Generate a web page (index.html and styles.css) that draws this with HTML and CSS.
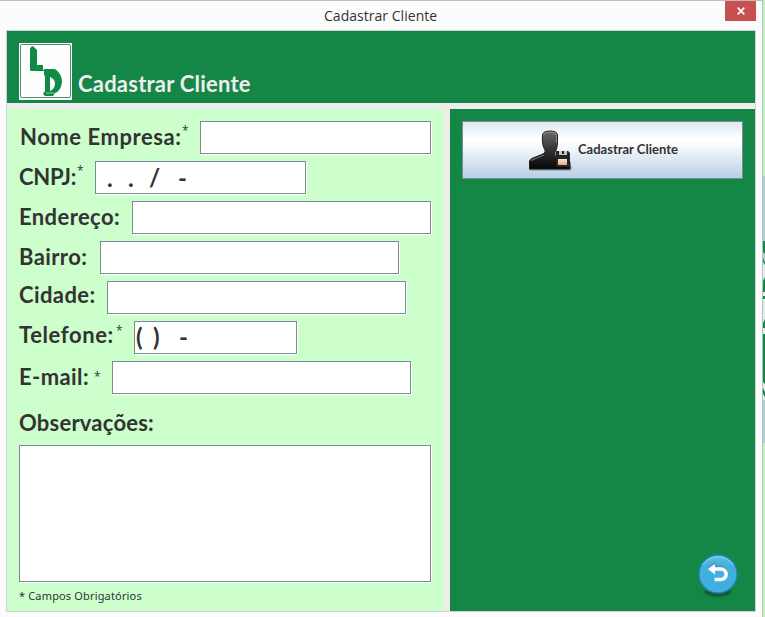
FILE: index.html
```html
<!DOCTYPE html>
<html lang="pt-BR">
<head>
<meta charset="utf-8">
<title>Cadastrar Cliente</title>
<link rel="stylesheet" href="styles.css">
</head>
<body>
<div class="screen">
  <main class="window">
    <div class="titlebar">
      <span class="window-title">Cadastrar Cliente</span>
      <button class="close" aria-label="Fechar"><svg width="8" height="8" viewBox="0 0 8 8"><path d="M.7.7 7.3 7.3M7.3.7.7 7.3" stroke="#fff" stroke-width="1.7"/></svg></button>
    </div>
    <div class="frame">
      <header class="header">
        <svg class="logo" width="53" height="57" viewBox="0 0 53 57">
          <rect width="53" height="57" fill="#fcfffd"/>
          <rect x="1.5" y="1.5" width="50" height="53" rx="1.5" fill="none" stroke="#568c70"/>
          <path d="M11 5.500Q13 2 15 4L18 7V22L24 22V27L12 28 11 27Z" fill="#108b43"/>
          <path d="M12 27.500H26" stroke="#108b43"/>
          <path fill-rule="evenodd" d="M25 26H36Q43 31 43 39 42 48 36 50L34 53H26L24 51 26 48V33L25 32ZM31 34V48Q36 46 36 40 35 35 31 34Z" fill="#108b43"/>
          <path d="M32 35Q36 36 36 40M27 50H35" fill="none" stroke="#8fc9a7"/>
        </svg>
        <h1 class="heading"><span class="t-head">Cadastrar Cliente</span></h1>
      </header>
      <div class="content">
        <form class="form">
          <div class="row nome"><label><span>Nome Empresa:</span></label><sup>*</sup><div class="field"></div></div>
          <div class="row cnpj"><label><span>CNPJ:</span></label><sup>*</sup><div class="field mask"><i>.</i><i>.</i><i>/</i><i>-</i></div></div>
          <div class="row endereco"><label><span>Endereço:</span></label><div class="field"></div></div>
          <div class="row bairro"><label><span>Bairro:</span></label><div class="field"></div></div>
          <div class="row cidade"><label><span>Cidade:</span></label><div class="field"></div></div>
          <div class="row telefone"><label><span>Telefone:</span></label><sup>*</sup><div class="field mask"><i>(</i><i>)</i><i>-</i></div></div>
          <div class="row email"><label><span>E-mail:</span></label><sup>*</sup><div class="field"></div></div>
          <div class="obs"><span>Observações:</span></div>
          <div class="area"></div>
          <p class="note">* Campos Obrigatórios</p>
        </form>
        <aside class="actions">
          <button class="save">
            <svg width="44" height="42" viewBox="0 0 44 42">
              <defs>
                <linearGradient id="person" x1="0" y1="0" x2="0" y2="1"><stop offset="0" stop-color="#6c6c6c"/><stop offset=".5" stop-color="#333"/><stop offset="1" stop-color="#050505"/></linearGradient>
                <linearGradient id="label" x1="0" y1="0" x2="0" y2="1"><stop offset="0" stop-color="#f8e8da"/><stop offset="1" stop-color="#eba875"/></linearGradient>
                <filter id="soft" x="-20%" y="-100%" width="140%" height="300%"><feGaussianBlur stdDeviation="1"/></filter>
              </defs>
              <rect x="0" y="37" width="42" height="4" fill="#344253" opacity=".7" filter="url(#soft)"/>
              <path d="M13.500 6Q14 2 21 2T28.500 6V14Q28 21 26 23V27L31 29 41 33V40H.5V32Q1 30 4 29L14 25Q17 23 16 21 12.500 16 13.500 6Z" fill="url(#person)" stroke="#202020"/>
              <path d="M14.500 6.500Q15 3 21 3T27.500 6.500V14M2 31.500 15 26" fill="none" stroke="#a0a0a0" stroke-width=".7"/>
              <path d="M27 22H39L41 24V38H27Z" fill="#242424"/>
              <rect x="30" y="22" width="8" height="4" fill="#c3c8ca"/><rect x="33" y="22" width="2" height="3" fill="#222"/>
              <rect x="29" y="30" width="9" height="6" fill="url(#label)"/>
            </svg>
            <span class="save-label"><b>Cadastrar Cliente</b></span>
          </button>
          <button class="back" aria-label="Voltar">
            <svg width="46" height="48" viewBox="0 0 46 48">
              <defs>
                <filter id="shade" x="-30%" y="-80%" width="160%" height="260%"><feGaussianBlur stdDeviation="1.500"/></filter>
                <linearGradient id="blue" x1="0" y1="0" x2="0" y2="1"><stop offset="0" stop-color="#62bddd"/><stop offset=".3" stop-color="#42b1df"/><stop offset="1" stop-color="#3faee0"/></linearGradient>
              </defs>
              <ellipse cx="23" cy="39" rx="13" ry="4" fill="#073f25" opacity=".8" filter="url(#shade)"/>
              <circle cx="23" cy="21" r="19" fill="url(#blue)" stroke="#2483b1" stroke-width="1.300"/>
              <path d="M8 12Q13 4 23 4T38 12" fill="none" stroke="#91d2e9"/>
              <path d="M13 15 20 10.500V14H25C34 14 34 27 25 27H19.500" fill="none" stroke="#666" stroke-width="1" opacity=".5" transform="translate(0 -1)"/>
              <path d="M18 16H25.500C33 16 33 26.500 25.500 26.500H19.500" fill="none" stroke="#fff" stroke-width="3.600"/>
              <path d="M13 16 20 11V21.500Z" fill="#fff"/>
            </svg>
          </button>
        </aside>
      </div>
    </div>
  </main>
  <div class="behind"><svg width="2" height="617" viewBox="0 0 2 617">
    <path fill="#c5f5bf" d="M0 0H2V617H0Z"/><path fill="#b0d3d2" d="M0 176H2V443H0Z"/>
    <path fill="#e2efe8" d="M0 260H2V400H0Z"/>
    <path fill="#128746" d="M0 241H2V254L0 252ZM0 258 2 262V265L0 262ZM0 281 2 277V292H0ZM0 296H2V299H0ZM0 323 2 319V328H0ZM0 334H2V384L0 382ZM0 388 2 392V397L0 394Z"/>
  </svg></div>
</div>
</body>
</html>
```
FILE: styles.css
```css
* { box-sizing: border-box; }
body { margin: 0; overflow: hidden; background: #fcfcfc; color: #333; font-family: Lato, "Liberation Sans", sans-serif; }
button { padding: 0; border: 0; font: inherit; color: inherit; }
svg { display: block; flex: none; }
.screen { display: flex; width: 765px; height: 617px; }
.window { width: 763px; height: 617px; padding-left: 6px; border-top: 1px solid #bdbdbd; border-right: 1px solid #bdbdbd; background: #fcfcfc; }
.behind { width: 2px; }
.titlebar { display: flex; align-items: flex-start; height: 29px; padding-left: 318px; }
.window-title { width: 401px; height: 29px; line-height: 29px; font-family: "Open Sans", sans-serif; font-size: 14px; letter-spacing: .03px; white-space: nowrap; }
.close { display: flex; width: 31px; height: 20px; align-items: center; justify-content: center; background: #c75050; }
.frame { width: 750px; height: 582px; border: 1px solid #cfd3d0; background: #eeecec; }
.header { display: flex; height: 72px; padding: 12px 0 0 12px; background: #148645; }
.heading { margin: 24px 0 0 6px; line-height: 34px; color: #eee; font-size: 22px; font-weight: 700; letter-spacing: .22px; white-space: nowrap; }
.content { display: flex; gap: 6px; margin-top: 6px; height: 502px; }
.form { width: 437px; padding: 12px 0 0 12px; background: #cfc; }
.row { display: flex; height: 33px; margin-bottom: 7px; }
.row label, .obs { line-height: 32px; font-size: 22px; font-weight: 700; letter-spacing: .4px; white-space: nowrap; }
.row label { flex: none; }
.row sup { flex: 1; font-family: "Open Sans", sans-serif; font-size: 12px; line-height: 20px; vertical-align: baseline; }
.field { flex: none; height: 33px; margin-left: auto; border: 1px solid #7a8a99; background: #fff; box-shadow: 1px 1px #fff; }
.nome { width: 412px; padding-left: 1px; }
.nome .field { width: 231px; }
.cnpj { width: 287px; }
.cnpj .field { width: 211px; }
.endereco { width: 412px; }
.bairro { width: 380px; }
.cidade { width: 387px; }
.endereco .field, .bairro .field, .cidade .field, .email .field { width: 299px; }
.telefone { width: 278px; }
.telefone .field { width: 163px; }
.email { width: 392px; }
.nome label { width: 162px; letter-spacing: .55px; }
.cnpj label { width: 58px; letter-spacing: -.25px; }
.telefone label { width: 97px; letter-spacing: .6px; }
.email label { width: 75px; }
.cidade label, .telefone label { line-height: 28px; }
.telefone sup { line-height: 20px; }
.email sup { line-height: 31px; }
.mask { display: flex; font-size: 24px; font-weight: 700; line-height: 31px; }
.mask i { font-style: normal; }
.cnpj .mask { padding-left: 11px; }
.cnpj i { width: 21px; }
.cnpj i:nth-child(3) { width: 29px; }
.telefone .mask { padding-left: 1px; line-height: 29px; }
.telefone i { width: 17px; }
.telefone i:nth-child(2) { width: 26px; }
.obs { height: 44px; line-height: 44px; letter-spacing: .22px; }
.area { width: 412px; height: 137px; border: 1px solid #7a8a99; background: #fff; box-shadow: 1px 1px #fff; }
.note { margin: 4px 0 0; font-family: "Noto Sans", sans-serif; font-size: 11px; line-height: 20px; letter-spacing: .16px; white-space: nowrap; }
.actions { display: flex; flex-direction: column; justify-content: space-between; width: 305px; padding: 12px 13px 10px 12px; background: #148645; }
.save { display: flex; align-items: center; width: 281px; height: 58px; padding-left: 66px; border: 1px solid #7a8a99; background: linear-gradient(#dde8f3, #fff 30%, #fff 36%, #b8cfe5); font-size: 13px; }
.save-label { margin: -2px 0 0 5px; white-space: nowrap; }
.back { align-self: flex-end; margin-right: 1px; background: none; }
```
